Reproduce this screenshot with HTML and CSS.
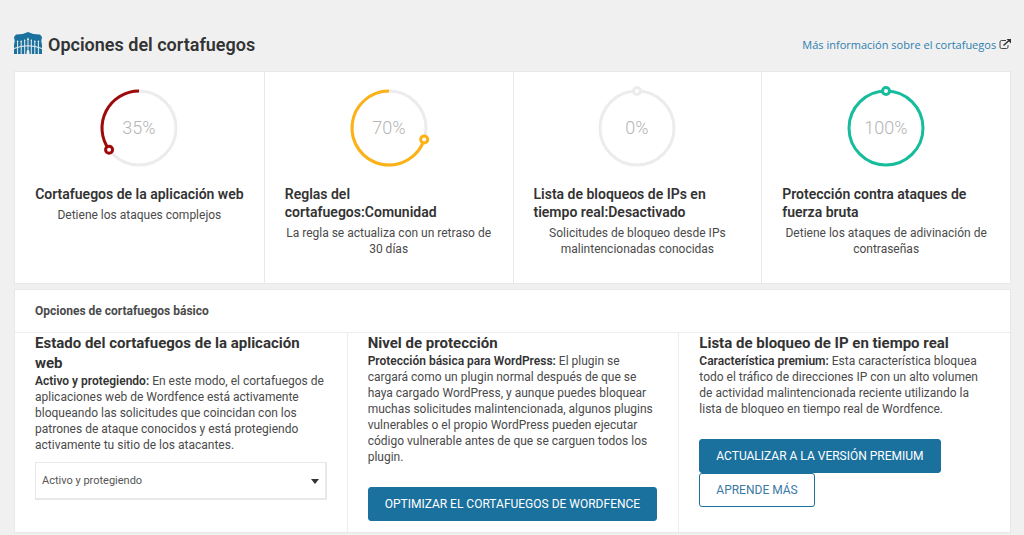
FILE: index.html
```html
<!DOCTYPE html>
<html lang="es">
<head>
<meta charset="utf-8">
<title>Opciones del cortafuegos</title>
<link rel="stylesheet" href="styles.css">
</head>
<body>
<main class="page">
  <header class="page-header">
    <svg class="logo" viewBox="0 0 28 22" aria-hidden="true">
      <path fill="#1b719e" d="M0 5 2 2.600Q8.500 2.800 14 0q5.500 2.800 12 2.600L28 5Q26.700 8 28 13v9H0v-9Q1.300 8 0 5z"/>
      <path fill="none" stroke="#f0f0f0" stroke-width="1" d="M3.600 9v13M7.200 9v13M10.700 9v13M14 7v10M17.300 9v13M20.800 9v13M24.400 9v13"/>
      <path fill="#f0f0f0" d="m3.600 8 .9 2H2.700zM7.200 8l.9 2H6.300zM10.700 7l.9 2H9.800zM14 5l1 3h-2zM17.300 7l.9 2h-1.800zM20.800 8l.9 2h-1.800zM24.400 8l.9 2h-1.800z"/>
      <path fill="none" stroke="#f0f0f0" d="M0 16.500Q14 11 28 16.500"/>
      <path fill="#f0f0f0" d="M12.500 22q0-4 1.500-5 1.500 1 1.500 5z"/>
    </svg>
    <h1 class="page-title">Opciones del cortafuegos</h1>
    <a class="help-link" href="#">Más información sobre el cortafuegos
      <svg class="external" viewBox="0 0 12 10" aria-hidden="true"><path fill="none" stroke="#444" d="M7 1.500H2.500Q1 1.500 1 3v5q0 1.500 1.500 1.500h5Q9 9.500 9 8V6"/><path fill="none" stroke="#333" stroke-width="1.500" d="M4.500 6.500 10 1.500"/><path fill="#333" d="M7.500 0H12v4.500z"/></svg>
    </a>
  </header>

  <section class="statuses">
    <article class="status">
      <svg class="ring" viewBox="0 0 84 84" aria-hidden="true">
        <circle class="track" cx="42" cy="42" r="37"/>
        <path class="arc red" d="M42 5A37 37 0 0 0 12.070 63.750"/>
        <circle class="knob red" cx="12.070" cy="63.750" r="3.500"/>
        <text class="percent" x="42" y="48">35%</text>
      </svg>
      <h2 class="status-title">Cortafuegos de la aplicación web</h2>
      <p class="status-text">Detiene los ataques complejos</p>
    </article>
    <article class="status">
      <svg class="ring" viewBox="0 0 84 84" aria-hidden="true">
        <circle class="track" cx="42" cy="42" r="37"/>
        <path class="arc yellow" d="M42 5A37 37 0 1 0 77.190 53.430"/>
        <circle class="knob yellow" cx="77.190" cy="53.430" r="3.500"/>
        <text class="percent" x="42" y="48">70%</text>
      </svg>
      <h2 class="status-title">Reglas del cortafuegos:Comunidad</h2>
      <p class="status-text">La regla se actualiza con un retraso de 30 días</p>
    </article>
    <article class="status">
      <svg class="ring" viewBox="0 0 84 84" aria-hidden="true">
        <circle class="track" cx="42" cy="42" r="37"/>
        <circle class="knob gray" cx="42" cy="5" r="3.500"/>
        <text class="percent" x="42" y="48">0%</text>
      </svg>
      <h2 class="status-title">Lista de bloqueos de IPs en tiempo real:Desactivado</h2>
      <p class="status-text">Solicitudes de bloqueo desde IPs malintencionadas conocidas</p>
    </article>
    <article class="status">
      <svg class="ring" viewBox="0 0 84 84" aria-hidden="true">
        <circle class="arc green" cx="42" cy="42" r="37"/>
        <circle class="knob green" cx="42" cy="5" r="3.500"/>
        <text class="percent" x="42" y="48">100%</text>
      </svg>
      <h2 class="status-title">Protección contra ataques de fuerza bruta</h2>
      <p class="status-text">Detiene los ataques de adivinación de contraseñas</p>
    </article>
  </section>

  <section class="block">
    <h2 class="block-title">Opciones de cortafuegos básico</h2>
    <div class="options">
      <div class="option">
        <h3 class="option-title" id="waf">Estado del cortafuegos de la aplicación web</h3>
        <p class="option-text"><strong>Activo y protegiendo:</strong> En este modo, el cortafuegos de aplicaciones web de Wordfence está activamente bloqueando las solicitudes que coincidan con los patrones de ataque conocidos y está protegiendo activamente tu sitio de los atacantes.</p>
        <div class="select-wrap">
          <select class="select" aria-labelledby="waf"><option>Activo y protegiendo</option></select>
          <svg class="caret" viewBox="0 0 8 5" aria-hidden="true"><path d="M0 0h8L4 5z"/></svg>
        </div>
      </div>
      <div class="option">
        <h3 class="option-title">Nivel de protección</h3>
        <p class="option-text"><strong>Protección básica para WordPress:</strong> El plugin se cargará como un plugin normal después de que se haya cargado WordPress, y aunque puedes bloquear muchas solicitudes malintencionada, algunos plugins vulnerables o el propio WordPress pueden ejecutar código vulnerable antes de que se carguen todos los plugin.</p>
        <div class="actions">
          <button class="button primary" type="button">OPTIMIZAR EL CORTAFUEGOS DE WORDFENCE</button>
        </div>
      </div>
      <div class="option">
        <h3 class="option-title">Lista de bloqueo de IP en tiempo real</h3>
        <p class="option-text"><strong>Característica premium:</strong> Esta característica bloquea todo el tráfico de direcciones IP con un alto volumen de actividad malintencionada reciente utilizando la lista de bloqueo en tiempo real de Wordfence.</p>
        <div class="actions">
          <a class="button primary" href="#">ACTUALIZAR A LA VERSIÓN PREMIUM</a>
          <a class="button" href="#">APRENDE MÁS</a>
        </div>
      </div>
    </div>
  </section>
</main>
</body>
</html>
```
FILE: styles.css
```css
* {
  box-sizing: border-box;
}

body {
  margin: 0;
  background: #f0f0f0;
  color: #4a4a4a;
  font: 12px/16px Roboto, sans-serif;
}

h1, h2, h3, p {
  margin: 0;
}

.page {
  padding: 31px 13px 3px 14px;
}

.page-header {
  display: flex;
  align-items: center;
  height: 28px;
  margin-bottom: 12px;
}

.logo {
  width: 28px;
  height: 22px;
  margin: 0 6px 4px 0;
}

.page-title {
  flex: 1;
  color: #333;
  font-size: 18px;
  line-height: 24px;
  font-weight: 600;
}

.help-link {
  color: #2e7fae;
  font-family: "Open Sans", sans-serif;
  font-size: 11px;
  text-decoration: none;
}

.external {
  width: 12px;
  height: 10px;
}

.statuses {
  display: grid;
  grid-template-columns: repeat(4, 1fr);
  min-height: 213px;
  margin-bottom: 5px;
  background: #fff;
  border: 1px solid #e6e9ea;
}

.status {
  display: flex;
  flex-direction: column;
  align-items: center;
  padding: 14px 20px;
}

.status + .status {
  border-left: 1px solid #e6e9ea;
}

.ring {
  width: 84px;
  height: 84px;
  margin-bottom: 15px;
}

.track, .arc, .knob {
  fill: none;
  stroke-width: 3;
}

.track {
  stroke: #ececec;
}

.knob {
  fill: #fff;
}

.red {
  stroke: #9e0a0a;
}

.yellow {
  stroke: #fcb214;
}

.gray {
  stroke: #ececec;
}

.green {
  stroke: #16bc9b;
}

.percent {
  fill: #b5b5b5;
  font-size: 18px;
  font-weight: 300;
  text-anchor: middle;
}

.status-title {
  color: #333;
  font-size: 14px;
  line-height: 18px;
  font-weight: 600;
}

.status-text {
  margin-top: 4px;
  text-align: center;
}

.block {
  background: #fff;
  border: 1px solid #e6e9ea;
}

.block-title {
  padding: 13px 20px;
  border-bottom: 1px solid #ebedee;
  font-size: 12px;
  line-height: 16px;
  font-weight: 700;
}

.options {
  display: grid;
  grid-template-columns: repeat(3, 1fr);
}

.option {
  min-height: 198px;
  padding: 0 20px 11px;
}

.option + .option {
  border-left: 1px solid #ebedee;
}

.option-title {
  color: #333;
  font-size: 15px;
  line-height: 20px;
  font-weight: 700;
}

.option-text strong {
  color: #333;
  font-weight: 600;
}

.select-wrap {
  position: relative;
  margin-top: 9px;
}

.select {
  width: 100%;
  height: 38px;
  padding: 0 6px;
  appearance: none;
  background: #fff;
  border: 1px solid #e8e8e8;
  border-right-width: 2px;
  border-bottom-width: 2px;
  border-radius: 0;
  color: #555;
  font: 11px/16px Roboto, sans-serif;
}

.caret {
  position: absolute;
  top: 17px;
  right: 8px;
  width: 8px;
  height: 5px;
  fill: #333;
}

.actions {
  display: flex;
  flex-direction: column;
  align-items: flex-start;
  margin-top: 22px;
}

.button {
  padding: 8px 16px;
  background: #fff;
  border: 1px solid #1b719e;
  border-radius: 3px;
  color: #3a79a6;
  font: 12px/16px Roboto, sans-serif;
  text-decoration: none;
  white-space: nowrap;
}

.primary {
  background: #1b719e;
  color: #fff;
}
```
